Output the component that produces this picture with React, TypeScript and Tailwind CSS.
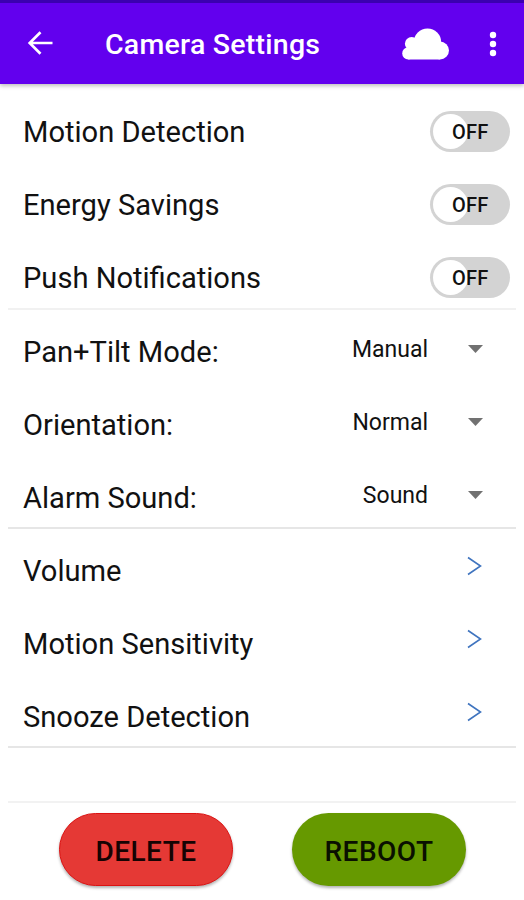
import type { ReactNode } from "react";

const toggles = ["Motion Detection", "Energy Savings", "Push Notifications"];

const selects = [
  { label: "Pan+Tilt Mode:", value: "Manual" },
  { label: "Orientation:", value: "Normal" },
  { label: "Alarm Sound:", value: "Sound" },
];

const links = ["Volume", "Motion Sensitivity", "Snooze Detection"];

function Header() {
  return (
    <header className="z-10 flex h-[84px] items-center border-t-[3px] border-[#3b00b0] bg-[#6200ee] pb-0.5 pl-[27px] pr-[27px] text-white shadow-[0_2px_4px_rgba(0,0,0,0.25)]">
      <button aria-label="Back">
        <svg className="block" width="26" height="26" viewBox="0 0 26 26" fill="none" stroke="currentColor" strokeWidth="2.7">
          <path d="M25.500 13H3M13.500 2.300L2.700 13l10.800 10.700" />
        </svg>
      </button>
      <h1 className="ml-[52px] mt-[5px] text-[28.5px] font-medium leading-none tracking-[0.25px]">Camera Settings</h1>
      <button className="ml-auto" aria-label="Cloud">
        <svg className="mt-[3px] block" width="47" height="32" viewBox="0 0 47 32" fill="currentColor">
          <circle cx="25.500" cy="14.200" r="13.700" />
          <circle cx="38" cy="22.500" r="9" />
          <circle cx="9.700" cy="15.700" r="6.800" />
          <circle cx="6.300" cy="25.400" r="6.100" />
          <path d="M6.300 31.500V15H30l8 16.500z" />
        </svg>
      </button>
      <button className="ml-[40px] mt-[2px]" aria-label="More options">
        <svg className="block" width="8" height="26" viewBox="0 0 8 26" fill="currentColor">
          <circle cx="4" cy="4" r="3.200" />
          <circle cx="4" cy="13" r="3.200" />
          <circle cx="4" cy="22" r="3.200" />
        </svg>
      </button>
    </header>
  );
}

function Group({ light, children }: { light?: boolean; children: ReactNode }) {
  return (
    <section className={`mx-2 border-b-2 ${light ? "h-[220px] border-[#f1f1f1]" : "h-[219px] border-[#e6e6e6]"}`}>
      {children}
    </section>
  );
}

function Row({ label, children }: { label: string; children: ReactNode }) {
  return (
    <div className="flex h-[73px] items-center pl-[15px] pt-[9px]">
      <span className="mt-[4px] text-[29.1px] leading-none">{label}</span>
      {children}
    </div>
  );
}

function Toggle() {
  return (
    <button className="relative ml-auto mr-[6px] flex h-[41px] w-[80px] items-center rounded-full bg-[#d3d3d3] pl-[3px]" role="switch" aria-checked="false">
      <span className="size-[35px] rounded-full bg-white" />
      <span className="absolute left-[22px] mt-[2px] text-[20px] font-medium leading-none tracking-[0.2px]">OFF</span>
    </button>
  );
}

export default function App() {
  return (
    <main className="flex h-[900px] w-[524px] flex-col overflow-hidden bg-white font-[Roboto,sans-serif] text-[#111]">
      <Header />

      <div className="pt-[6px]">
        <Group light>
          {toggles.map((label) => (
            <Row key={label} label={label}>
              <Toggle />
            </Row>
          ))}
        </Group>

        <Group>
          {selects.map(({ label, value }) => (
            <Row key={label} label={label}>
              <span className="mb-[3px] ml-auto text-[23px] leading-none">{value}</span>
              <svg className="mb-[5px] ml-[40px] mr-[33px]" width="15" height="8" viewBox="0 0 15 8" fill="#717171">
                <path d="M0 0h15L7.500 8z" />
              </svg>
            </Row>
          ))}
        </Group>

        <Group>
          {links.map((label) => (
            <Row key={label} label={label}>
              <svg className="mb-[9px] ml-auto mr-[34px]" width="15" height="20" viewBox="0 0 15 20" fill="none" stroke="#3f74bf" strokeWidth="1.600">
                <path d="M1 1.500L13.500 10 1 18.500" />
              </svg>
            </Row>
          ))}
        </Group>
      </div>

      <footer className="mx-2 mt-[53px] flex border-t-2 border-[#f2f2f2] pl-[51px] pt-[10px]">
        <button className="h-[73px] w-[174px] rounded-full border border-[#dc1212] bg-[#e53935] pt-[4px] text-[28px] font-medium tracking-[0.5px] text-[#160303] shadow-[0_2px_3px_rgba(0,0,0,0.3)]">
          DELETE
        </button>
        <button className="ml-[59px] h-[73px] w-[174px] rounded-full bg-[#669900] pt-[4px] text-[28px] font-medium tracking-[0.5px] text-[#0a1000] shadow-[0_2px_3px_rgba(0,0,0,0.3)]">
          REBOOT
        </button>
      </footer>
    </main>
  );
}
